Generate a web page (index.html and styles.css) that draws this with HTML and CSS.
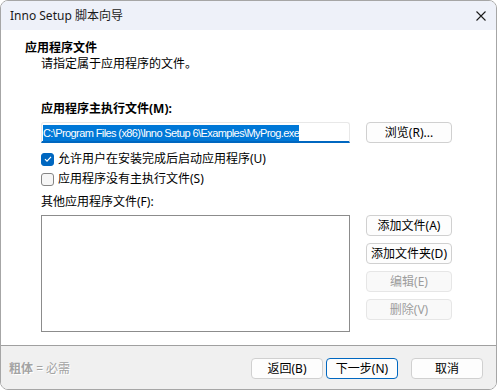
FILE: index.html
```html
<!DOCTYPE html>
<html lang="zh-CN">
<head>
  <meta charset="UTF-8">
  <title>Inno Setup 脚本向导</title>
  <link rel="stylesheet" href="styles.css">
</head>
<body>

<div class="window">
  <div class="titlebar">
    <span class="title">Inno Setup 脚本向导</span>
    <svg class="close" width="10" height="10" viewBox="0 0 10 10">
      <path d="M0.5 0.5 L9.5 9.5 M9.5 0.5 L0.5 9.5" stroke="#1b1b1b" stroke-width="1.1" fill="none"/>
    </svg>
  </div>

  <div class="page">
    <h1>应用程序文件</h1>
    <p class="subtitle">请指定属于应用程序的文件。</p>

    <label class="label bold">应用程序主执行文件(M):</label>
    <div class="row">
      <div class="textbox"><span class="selected">C:\Program Files (x86)\Inno Setup 6\Examples\MyProg.exe</span></div>
      <button class="btn">浏览(R)...</button>
    </div>

    <div class="check first">
      <span class="box checked">
        <svg width="8" height="8" viewBox="0 0 8 8"><path d="M1 4.2 L3 6.2 L7 1.8" stroke="#fff" stroke-width="1.2" fill="none"/></svg>
      </span>
      允许用户在安装完成后启动应用程序(U)
    </div>
    <div class="check">
      <span class="box"></span>
      应用程序没有主执行文件(S)
    </div>

    <label class="label other">其他应用程序文件(F):</label>
    <div class="row">
      <div class="listbox"></div>
      <div class="side">
        <button class="btn">添加文件(A)</button>
        <button class="btn">添加文件夹(D)</button>
        <button class="btn" disabled>编辑(E)</button>
        <button class="btn" disabled>删除(V)</button>
      </div>
    </div>
  </div>

  <div class="footer">
    <span class="hint"><b>粗体</b> = 必需</span>
    <div class="actions">
      <button class="btn">返回(B)</button>
      <button class="btn default">下一步(N)</button>
      <button class="btn cancel">取消</button>
    </div>
  </div>
</div>

</body>
</html>
```

FILE: styles.css
```css
* { margin: 0; padding: 0; box-sizing: border-box; }
body {
  font-family: "Noto Sans", "Noto Sans CJK SC", sans-serif;
  font-size: 12px;
  color: #000;
  background: #fff;
}
.window {
  width: 497px;
  height: 390px;
  border: 1px solid #a6a6a6;
  border-radius: 8px;
  overflow: hidden;
  display: flex;
  flex-direction: column;
  background: #fff;
}
.titlebar {
  height: 29px;
  background: #eef1f9;
  display: flex;
  align-items: center;
  justify-content: space-between;
  padding: 0 10px 0 9px;
  flex-shrink: 0;
}
.title {
  font-size: 12px;
  line-height: 16px;
  color: #1a1a1a;
}
.close { display: block; }

.page {
  flex: 1;
  padding: 10px 0 0 40px;
  border-bottom: 1px solid #a0a0a0;
}
h1 {
  font-size: 12px;
  font-weight: bold;
  line-height: 16px;
  margin-left: -16px;
}
.subtitle { line-height: 16px; }
.label {
  display: block;
  line-height: 16px;
}
.bold { font-weight: bold; margin-top: 29px; }
.other { margin-top: 7px; }
.row {
  display: flex;
  gap: 16px;
  margin-top: 5px;
}
.textbox {
  width: 309px;
  height: 21px;
  background: #fff;
  border: 1px solid #e8e8e8;
  border-bottom: 2px solid #0067c0;
  border-radius: 3px 3px 0 0;
  padding: 1px 0 0 1px;
  white-space: nowrap;
  overflow: hidden;
}
.selected {
  display: inline-block;
  background: #0078d7;
  color: #fff;
  line-height: 16px;
  font-family: "Liberation Sans", sans-serif;
  font-size: 11px;
  letter-spacing: -0.6px;
}
.btn {
  font-family: inherit;
  font-size: 12px;
  width: 86px;
  height: 21px;
  background: #fdfdfd;
  border: 1px solid #d0d0d0;
  border-radius: 4px;
  color: #000;
  line-height: 18px;
}
.btn:disabled {
  background: #f9f9f9;
  border-color: #e6e6e6;
  color: #9d9d9d;
}
.check {
  display: flex;
  align-items: center;
  gap: 4px;
  height: 16px;
  line-height: 16px;
  margin-top: 4px;
}
.check.first { margin-top: 8px; }
.box {
  width: 13px;
  height: 13px;
  border: 1px solid #858585;
  border-radius: 3px;
  background: #f6f6f6;
  display: flex;
  align-items: center;
  justify-content: center;
}
.box.checked {
  background: #0067c0;
  border-color: #0067c0;
}
.listbox {
  width: 309px;
  height: 117px;
  border: 1px solid #8c8c8c;
  background: #fff;
}
.side {
  display: flex;
  flex-direction: column;
  gap: 7px;
}

.footer {
  height: 43px;
  background: #f0f0f0;
  display: flex;
  align-items: flex-start;
  justify-content: space-between;
  padding: 12px 13px 0 8px;
  flex-shrink: 0;
}
.hint {
  color: #a3a3a3;
  text-shadow: 1px 1px 0 #fff;
  line-height: 21px;
}
.actions { display: flex; }
.actions .btn { width: 72px; }
.actions .btn + .btn { margin-left: 3px; }
.actions .cancel { margin-left: 13px !important; }
.btn.default { border-color: #0067c0; }
```
